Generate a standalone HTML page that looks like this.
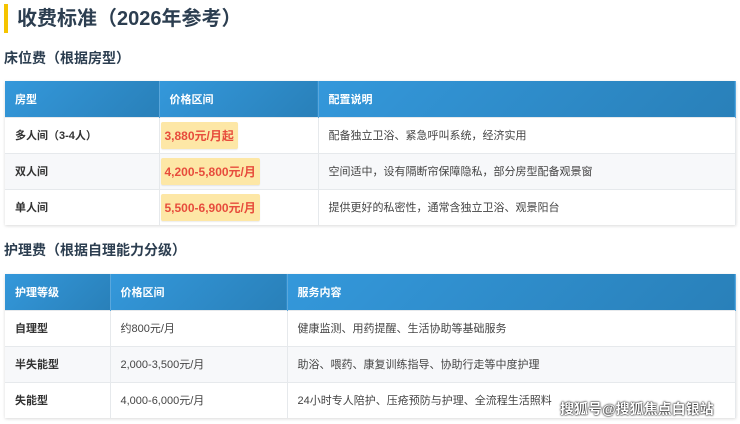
<!DOCTYPE html>
<html><head><meta charset="utf-8"><style>
*{margin:0;padding:0;box-sizing:border-box}
body{width:740px;height:424px;background:#fff;font-family:"Liberation Sans","Noto Sans CJK SC",sans-serif;color:#333;position:relative;overflow:hidden}
.bar{position:absolute;left:4px;top:4px;width:4px;height:29px;background:#f5c400}
h1{position:absolute;left:17px;top:6px;font-size:20px;font-weight:bold;color:#2c3e50;line-height:26px}
h2{position:absolute;left:4px;font-size:14px;font-weight:bold;color:#2c3e50;line-height:20px}
table{position:absolute;left:5px;width:731px;border-collapse:collapse;font-size:11px;box-shadow:0 1px 3px rgba(0,0,0,.15)}
th{background:linear-gradient(135deg,#3498db,#2980b9);color:#fff;text-align:left;font-weight:bold;padding-left:10px;height:36px;border-right:1px solid #5aa7dc}
td{padding-left:10px;height:36px;border-top:1px solid #e6e9ec;border-right:1px solid #e6e9ec;color:#444}
tr:nth-child(odd) td{background:#f7f8fa}
tr:nth-child(even) td{background:#fff}
td.b{font-weight:bold;color:#333}
.p{display:inline-block;background:#fde7a6;color:#e74c3c;font-weight:bold;font-size:12px;padding:5px 4px;border-radius:2px;margin-left:-9px;box-shadow:0 1px 1px rgba(0,0,0,.08)}
.wm{position:absolute;left:560px;top:399px;font-size:14px;color:#fff;text-shadow:0 0 2px #000,0 0 1px #000;font-weight:bold}
</style></head><body>
<div class="bar"></div>
<h1>收费标准（2026年参考）</h1>
<h2 style="top:48px">床位费（根据房型）</h2>
<table style="top:81px">
<tr><th style="width:154px">房型</th><th style="width:159px">价格区间</th><th>配置说明</th></tr>
<tr><td class="b">多人间（3-4人）</td><td><span class="p">3,880元/月起</span></td><td>配备独立卫浴、紧急呼叫系统，经济实用</td></tr>
<tr><td class="b">双人间</td><td><span class="p">4,200-5,800元/月</span></td><td>空间适中，设有隔断帘保障隐私，部分房型配备观景窗</td></tr>
<tr><td class="b">单人间</td><td><span class="p">5,500-6,900元/月</span></td><td>提供更好的私密性，通常含独立卫浴、观景阳台</td></tr>
</table>
<h2 style="top:240px">护理费（根据自理能力分级）</h2>
<table style="top:274px">
<tr><th style="width:105px">护理等级</th><th style="width:177px">价格区间</th><th>服务内容</th></tr>
<tr><td class="b">自理型</td><td>约800元/月</td><td>健康监测、用药提醒、生活协助等基础服务</td></tr>
<tr><td class="b">半失能型</td><td>2,000-3,500元/月</td><td>助浴、喂药、康复训练指导、协助行走等中度护理</td></tr>
<tr><td class="b">失能型</td><td>4,000-6,000元/月</td><td>24小时专人陪护、压疮预防与护理、全流程生活照料</td></tr>
</table>
<div class="wm">搜狐号@搜狐焦点白银站</div>
</body></html>
